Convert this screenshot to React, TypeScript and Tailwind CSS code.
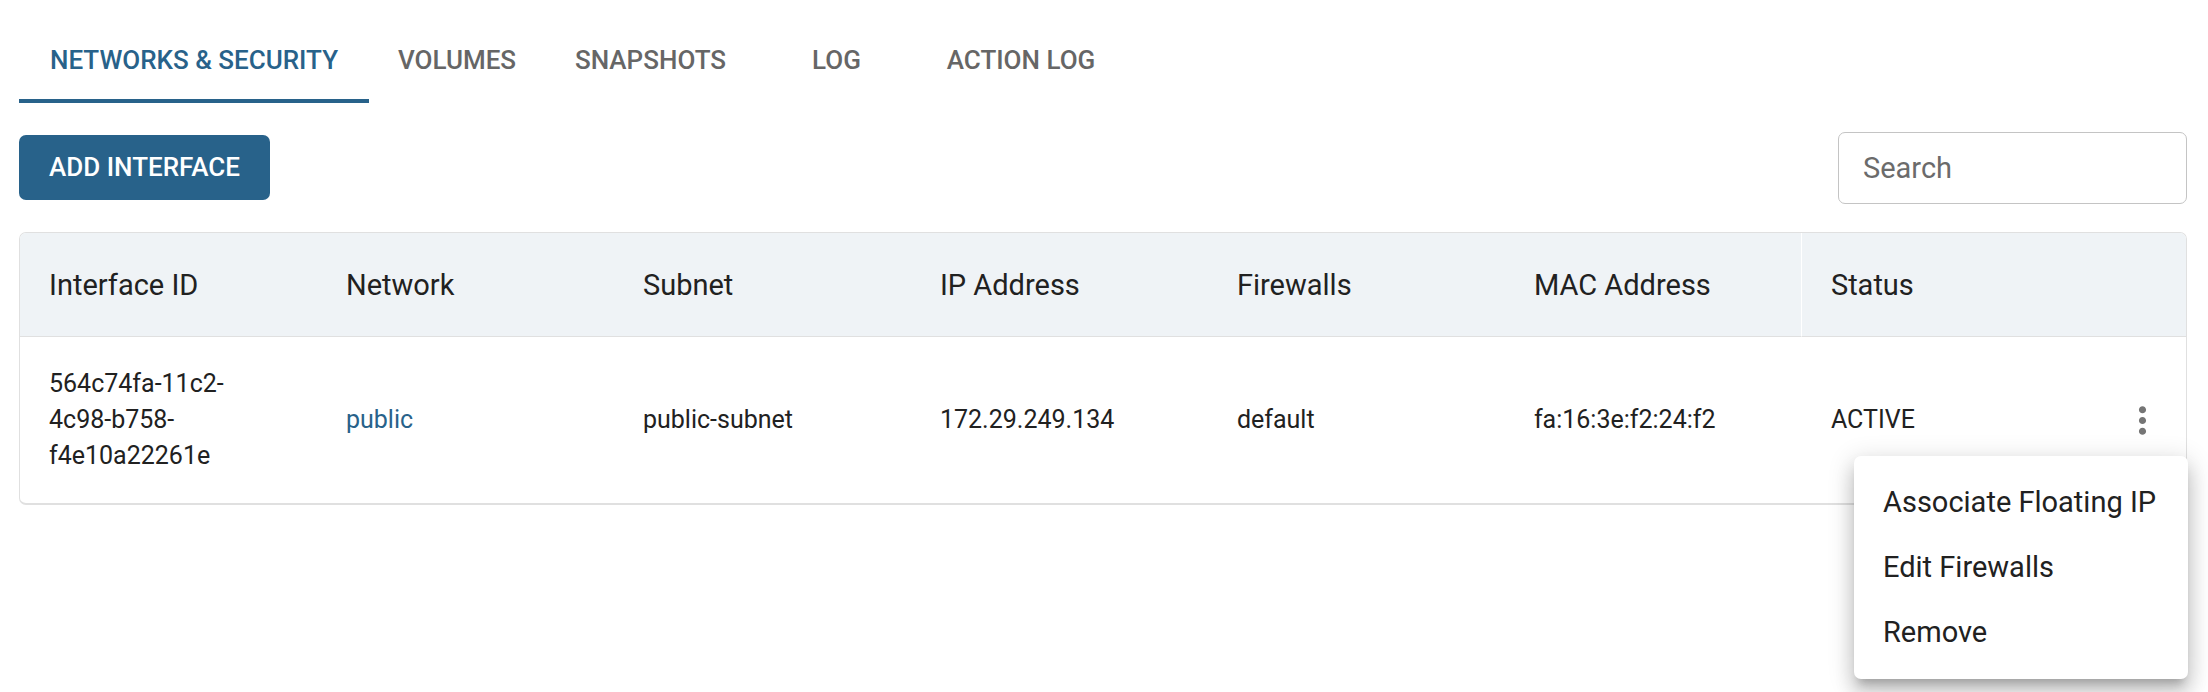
import { MdMoreVert } from "react-icons/md";

const tabs = [
  { label: "Networks & Security", width: "min-w-[350px]" },
  { label: "Volumes", width: "min-w-[176px]" },
  { label: "Snapshots", width: "min-w-[211px]" },
  { label: "Log", width: "min-w-[161px]" },
  { label: "Action Log", width: "min-w-[208px]" },
];

const columns = [
  "Interface ID",
  "Network",
  "Subnet",
  "IP Address",
  "Firewalls",
  "MAC Address",
];

const actions = ["Associate Floating IP", "Edit Firewalls", "Remove"];

function Tabs() {
  return (
    <div role="tablist" className="flex h-[103px]">
      {tabs.map((tab, i) => (
        <button
          key={tab.label}
          type="button"
          role="tab"
          aria-selected={i === 0}
          className={`${tab.width} border-b-4 pt-5 text-[26px] leading-9 font-medium uppercase whitespace-nowrap ${
            i === 0
              ? "border-[#28628a] text-[#28628a]"
              : "border-transparent text-[#666666]"
          }`}
        >
          {tab.label}
        </button>
      ))}
    </div>
  );
}

function ActionMenu() {
  return (
    <div
      role="menu"
      className="absolute top-[119px] -right-0.5 z-10 w-[334px] rounded-[7px] bg-white py-3.5 shadow-[0_9px_9px_-5px_rgba(0,0,0,0.2),0_14px_18px_2px_rgba(0,0,0,0.14),0_5px_25px_4px_rgba(0,0,0,0.12)]"
    >
      {actions.map((action) => (
        <button
          key={action}
          type="button"
          role="menuitem"
          className="block h-[65px] w-full px-[29px] pb-0.5 text-left text-[29px] whitespace-nowrap"
        >
          {action}
        </button>
      ))}
    </div>
  );
}

function InterfaceTable() {
  return (
    <div className="rounded-[7px] border border-b-2 border-[#e0e0e0]">
      <table className="w-full table-fixed border-separate border-spacing-0 text-left">
        <colgroup>
          {columns.map((c) => (
            <col key={c} />
          ))}
          <col />
          <col className="w-[87px]" />
        </colgroup>
        <thead className="bg-[#eff3f6] text-[29px] leading-[43px]">
          <tr>
            {columns.map((c) => (
              <th
                key={c}
                scope="col"
                className="border-b border-[#e0e0e0] px-[29px] pt-[31px] pb-[29px] font-normal first:rounded-tl-[6px] nth-6:border-r nth-6:border-r-white"
              >
                {c}
              </th>
            ))}
            <th
              scope="col"
              colSpan={2}
              className="rounded-tr-[6px] border-b border-[#e0e0e0] px-[29px] pt-[31px] pb-[29px] font-normal"
            >
              Status
            </th>
          </tr>
        </thead>
        <tbody className="text-[25px] leading-9">
          <tr>
            <td className="py-[29px] pr-10 pl-[29px]">564c74fa-11c2-4c98-b758-f4e10a22261e</td>
            <td className="px-[29px]">
              <a href="#public" className="text-[#28628a]">
                public
              </a>
            </td>
            <td className="px-[29px]">public-subnet</td>
            <td className="px-[29px]">172.29.249.134</td>
            <td className="px-[29px]">default</td>
            <td className="px-[29px]">fa:16:3e:f2:24:f2</td>
            <td className="px-[29px]">ACTIVE</td>
            <td className="relative">
              <button
                type="button"
                aria-label="Interface actions"
                aria-haspopup="menu"
                aria-expanded="true"
                className="mx-auto block text-[#757575]"
              >
                <MdMoreVert size={43} />
              </button>
              <ActionMenu />
            </td>
          </tr>
        </tbody>
      </table>
    </div>
  );
}

export default function App() {
  return (
    <main className="min-h-screen bg-white pr-[21px] pl-[19px] font-['Roboto',sans-serif] text-[#212121]">
      <Tabs />
      <div className="flex items-start justify-between pt-[29px] pb-7">
        <button
          type="button"
          className="mt-[3px] h-[65px] w-[251px] rounded-[7px] bg-[#28628a] text-[26px] font-medium text-white uppercase"
        >
          Add Interface
        </button>
        <input
          type="search"
          aria-label="Search"
          placeholder="Search"
          className="h-[72px] w-[349px] rounded-[7px] border border-[#c4c4c4] px-6 text-[29px] placeholder:text-[#6b6b6b]"
        />
      </div>
      <InterfaceTable />
    </main>
  );
}
